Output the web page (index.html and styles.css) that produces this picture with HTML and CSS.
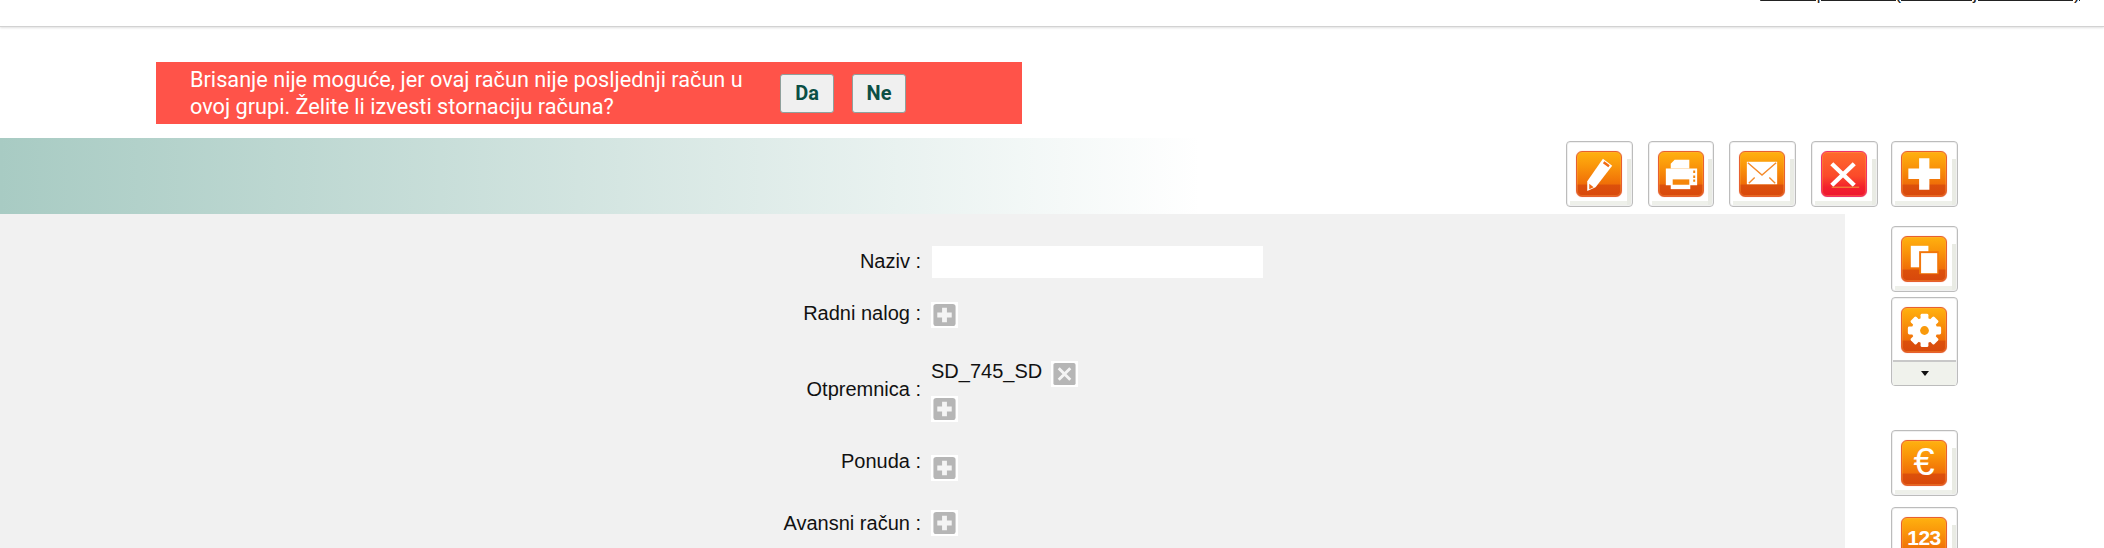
FILE: index.html
```html
<!DOCTYPE html>
<html lang="hr">
<head>
<meta charset="utf-8">
<title>Račun</title>
<link rel="stylesheet" href="styles.css">
</head>
<body>
<header class="topbar"><a class="userlink" href="#">Admin | Korisnik (Ana Marija Kovačević)</a><span class="userdot">.</span></header>

<div class="alert">
  <p class="alert-text">Brisanje nije moguće, jer ovaj račun nije posljednji račun u ovoj grupi. Želite li izvesti stornaciju računa?</p>
  <button class="alert-btn" type="button">Da</button>
  <button class="alert-btn" type="button">Ne</button>
</div>

<div class="band">
  <a class="tool" href="#"><span class="tile">
    <svg class="glyph" viewBox="0 0 45 45"><path d="M26.500 7 36 14 19 36 10.500 40 10.500 30Z" fill="#fff"/><path d="M28 9.500 33.500 13.500 32 15.500 26.500 11.500Z" fill="#f26a12"/><path d="M12.500 32.500 17 36 12.500 38Z" fill="#f26a12"/></svg>
  </span></a>
  <a class="tool tool-narrow" href="#"><span class="tile">
    <svg class="glyph" viewBox="0 0 45 45"><path d="M16 8H31V17H12V12Z" fill="#fff"/><path d="M7 17H39V34H7Z" fill="#fff"/><path d="M12 27H32V38H12Z" fill="#fff"/><path d="M14 28H31V33.500H14Z" fill="#f5860a"/><path d="M35 19h2v2.500h-2zM35 24h2v2.500h-2zM35 28h2v2.500h-2z" fill="#f5860a"/></svg>
  </span></a>
  <a class="tool" href="#"><span class="tile">
    <svg class="glyph" viewBox="0 0 45 45"><path d="M7 10H38V33H7Z" fill="#fff"/><path d="M8 11 22.500 23.500 37 11M9 32 15 26M36 32 30 26" fill="none" stroke="#f48a2a" stroke-width="1.400"/></svg>
  </span></a>
  <a class="tool tool-close" href="#"><span class="tile tile-red">
    <svg class="glyph" viewBox="0 0 45 45"><path d="M10 12 33 34M33 12 10 34" fill="none" stroke="#fff" stroke-width="4.500"/><path d="M10 36H38" stroke="#f2a23a" stroke-width="1"/></svg>
  </span></a>
  <a class="tool" href="#"><span class="tile">
    <svg class="glyph" viewBox="0 0 45 45"><path d="M17.500 6.500H28V17H39V27.500H28V38.500H17.500V27.500H6.500V17H17.500Z" fill="#fff"/></svg>
  </span></a>
</div>

<div class="content">
  <main class="panel">
    <div class="form-row">
      <label class="form-label" for="naziv">Naziv :</label>
      <input class="form-input" id="naziv" type="text">
    </div>
    <div class="form-row form-row-radni">
      <span class="form-label">Radni nalog :</span>
      <div class="form-value"><a class="mini" href="#"><svg viewBox="0 0 27 27"><rect x="2" y="2" width="23" height="23" rx="3" fill="#b6b6b6"/><path d="M11 6h5v5h5v5h-5v5h-5v-5H6v-5h5z" fill="#f4f4f4"/></svg></a></div>
    </div>
    <div class="form-row form-row-otp">
      <span class="form-label">Otpremnica :</span>
      <div class="form-value form-stack">
        <div class="doc"><span>SD_745_SD</span><a class="mini" href="#"><svg viewBox="0 0 27 27"><rect x="2" y="2" width="23" height="23" rx="2" fill="#b6b6b6"/><path d="M7.500 7.500 19.500 19.500M19.500 7.500 7.500 19.500" stroke="#f4f4f4" stroke-width="3"/></svg></a></div>
        <a class="mini" href="#"><svg viewBox="0 0 27 27"><rect x="2" y="2" width="23" height="23" rx="3" fill="#b6b6b6"/><path d="M11 6h5v5h5v5h-5v5h-5v-5H6v-5h5z" fill="#f4f4f4"/></svg></a>
      </div>
    </div>
    <div class="form-row form-row-ponuda">
      <span class="form-label">Ponuda :</span>
      <div class="form-value form-value-low"><a class="mini" href="#"><svg viewBox="0 0 27 27"><rect x="2" y="2" width="23" height="23" rx="3" fill="#b6b6b6"/><path d="M11 6h5v5h5v5h-5v5h-5v-5H6v-5h5z" fill="#f4f4f4"/></svg></a></div>
    </div>
    <div class="form-row form-row-avans">
      <span class="form-label">Avansni račun :</span>
      <div class="form-value"><a class="mini" href="#"><svg viewBox="0 0 27 27"><rect x="2" y="2" width="23" height="23" rx="3" fill="#b6b6b6"/><path d="M11 6h5v5h5v5h-5v5h-5v-5H6v-5h5z" fill="#f4f4f4"/></svg></a></div>
    </div>
  </main>

  <aside class="side">
    <a class="tool" href="#"><span class="tile">
      <svg class="glyph" viewBox="0 0 45 45"><path d="M9 9H27V31H9Z" fill="#fff"/><path d="M17.500 14.500H37.500V38H17.500Z" fill="#f2760a"/><path d="M19.500 16.500H36V37H19.500Z" fill="#fff"/></svg>
    </span></a>
    <div class="tool tool-menu">
      <a class="tool-main" href="#"><span class="tile">
        <svg class="glyph" viewBox="0 0 45 45"><g fill="#fff"><circle cx="23" cy="23" r="13"/><rect x="19" y="6" width="8" height="34" rx="1.500"/><rect x="19" y="6" width="8" height="34" rx="1.500" transform="rotate(45 23 23)"/><rect x="19" y="6" width="8" height="34" rx="1.500" transform="rotate(90 23 23)"/><rect x="19" y="6" width="8" height="34" rx="1.500" transform="rotate(135 23 23)"/></g><circle cx="23" cy="23" r="4.500" fill="#f99a0c"/></svg>
      </span></a>
      <a class="tool-drop" href="#"><span class="caret"></span></a>
    </div>
    <a class="tool tool-euro" href="#"><span class="tile"><span class="tile-text tile-euro">€</span></span></a>
    <a class="tool tool-num" href="#"><span class="tile"><span class="tile-text tile-num">123</span></span></a>
  </aside>
</div>
</body>
</html>
```
FILE: styles.css
```css
* { box-sizing: border-box; }

html, body {
  margin: 0;
  height: 548px;
  overflow: hidden;
  background: #fff;
  font-family: "Liberation Sans", Arial, sans-serif;
  color: #111;
}

.topbar {
  height: 27px;
  border-bottom: 1px solid #d2d2d2;
  box-shadow: 0 1px 2px rgba(0, 0, 0, .12);
  display: flex;
  justify-content: flex-end;
  align-items: flex-end;
  overflow: hidden;
  padding: 0 19px 22px 0;
  font-size: 18px;
  line-height: 21px;
}

.userlink { color: #222; text-decoration: underline; white-space: nowrap; }
.userdot { color: #222; }

.alert {
  margin: 35px 0 0 156px;
  width: 866px;
  height: 62px;
  background: #ff5349;
  color: #fff;
  display: flex;
  align-items: center;
  padding-left: 34px;
  font-family: Roboto, sans-serif;
}

.alert-text {
  margin: 0;
  width: 590px;
  font-size: 21.700px;
  line-height: 27px;
}

.alert-btn {
  width: 54px;
  height: 39px;
  margin-right: 18px;
  padding: 0;
  background: #f0f0f0;
  border: 1px solid #8fa09c;
  border-radius: 3px;
  color: #0b4f45;
  font: 700 20px Roboto, sans-serif;
}

.band {
  margin-top: 14px;
  height: 76px;
  padding: 3px 146px 0 0;
  background: linear-gradient(90deg, #a8cbc3 0, #fff 1200px);
  display: flex;
  justify-content: flex-end;
  gap: 15px;
}

.tool {
  width: 67px;
  height: 66px;
  padding: 9px 0 0 9px;
  display: block;
  background:
    linear-gradient(#e9ebe4, #e9ebe4) right 1px bottom 1px / 4px 46px no-repeat,
    linear-gradient(#eef0ea, #eef0ea) left 3px bottom 1px / 60px 4px no-repeat,
    #fff;
  border: 1px solid #bcbcbc;
  border-radius: 4px;
  box-shadow: inset 0 0 0 1px #f0f0f0;
  text-decoration: none;
}

.tool-narrow { width: 66px; }
.tool-close { margin-right: -2px; }

.tile {
  width: 46px;
  height: 46px;
  display: block;
  position: relative;
  overflow: hidden;
  border: 1.500px solid #e7602f;
  border-radius: 6px;
  background: linear-gradient(#ffb10f 0, #fa960a 32%, #f06f08 72%, #dc500b 76%, #d8480c 100%);
  box-shadow: 0 0 1px #f0a585, inset 0 0 0 1px rgba(255, 180, 80, .3);
}

.tile-red {
  border-color: #f0306a;
  background: linear-gradient(#ff6a2c 0, #fb4a2a 55%, #f3202c 80%, #ee1530 100%);
}

.glyph {
  width: 100%;
  height: 100%;
  display: block;
  filter: blur(.35px);
}

.tile-text {
  display: block;
  text-align: center;
  color: #fff;
  font-family: "Liberation Sans", sans-serif;
}

.tile-euro { font-size: 38px; line-height: 43px; }
.tile-num { font-size: 21px; font-weight: 700; line-height: 40px; letter-spacing: -.5px; }

.content { display: flex; }

.panel {
  width: 1845px;
  height: 334px;
  padding-top: 32px;
  background: #f1f1f1;
}

.form-row {
  display: flex;
  align-items: center;
  font-size: 20px;
  line-height: 23px;
}

.form-label {
  width: 921px;
  padding-bottom: 2px;
  text-align: right;
  flex: none;
}

.form-input {
  width: 331px;
  height: 32px;
  margin-left: 11px;
  border: 0;
  background: #fff;
}

.form-value { margin-left: 10px; }
.form-value-low { padding-top: 9px; }
.form-stack { display: flex; flex-direction: column; gap: 9px; }

.form-row-radni { margin-top: 24px; }
.form-row-radni .form-label { padding-bottom: 3px; }
.form-row-otp { margin-top: 33px; }
.form-row-otp .form-label { padding-bottom: 4px; }
.form-row-ponuda { margin-top: 24px; }
.form-row-ponuda .form-label { padding-bottom: 5px; }
.form-row-avans { margin-top: 29px; }
.form-row-avans .form-label { padding-bottom: 0; }

.doc { display: flex; gap: 9px; align-items: flex-start; }
.doc span { line-height: 21px; }

.mini {
  width: 27px;
  height: 26px;
  display: block;
  background: #fff;
}

.mini svg { width: 27px; height: 26px; display: block; filter: blur(.3px); }

.side {
  margin-left: 46px;
  padding-top: 12px;
  display: flex;
  flex-direction: column;
}

.tool-menu { height: 89px; margin-top: 5px; padding: 0; background: #fff; }

.tool-main { display: block; height: 62px; padding: 9px 0 0 9px; }

.tool-drop {
  height: 25px;
  margin: 0 1px;
  border-top: 2px solid #c8c8c8;
  background: #f0f2ec;
  display: flex;
  align-items: center;
  justify-content: center;
}

.caret {
  width: 0;
  height: 0;
  border-left: 4px solid transparent;
  border-right: 4px solid transparent;
  border-top: 5px solid #111;
}

.tool-euro { margin-top: 44px; }
.tool-num { margin-top: 11px; }
```
